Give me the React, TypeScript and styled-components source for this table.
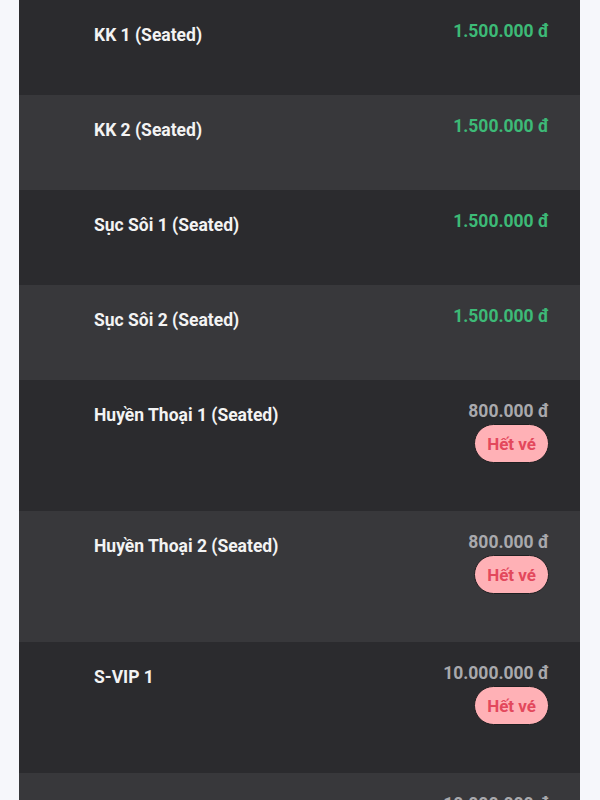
import React from "react";
import styled, { createGlobalStyle } from "styled-components";

const GlobalStyle = createGlobalStyle`
  html, body {
    margin: 0;
    padding: 0;
    background: #f6f7fb;
    font-family: Roboto, "Noto Sans", "Liberation Sans", sans-serif;
  }
`;

const Page = styled.div`
  padding: 0 19px;
  height: 800px;
  overflow: hidden;
`;

const List = styled.div`
  display: flex;
  flex-direction: column;
  width: 561px;
`;

const Row = styled.div<{ $alt: boolean }>`
  display: flex;
  justify-content: space-between;
  align-items: flex-start;
  padding: 23px 31px 48px 75px;
  background: ${(p) => (p.$alt ? "#38383b" : "#2b2b2e")};
`;

const Title = styled.div`
  font-size: 17.5px;
  font-weight: 700;
  line-height: 24px;
  color: #f3f3f3;
`;

const Side = styled.div`
  display: flex;
  flex-direction: column;
  align-items: flex-end;
  gap: 5px;
`;

const Price = styled.div<{ $available: boolean }>`
  font-size: 17.5px;
  font-weight: 700;
  line-height: 16px;
  color: ${(p) => (p.$available ? "#3dba77" : "#a9a9ad")};
`;

const SoldOut = styled.div`
  height: 39px;
  box-sizing: border-box;
  padding: 0 12px;
  display: flex;
  align-items: center;
  border-radius: 20px;
  border: 1px solid #1f1f21;
  background: #ffb1b6;
  color: #e3485c;
  font-size: 17px;
  font-weight: 700;
`;

type Ticket = { name: string; price: string; soldOut: boolean };

const tickets: Ticket[] = [
  { name: "KK 1 (Seated)", price: "1.500.000 đ", soldOut: false },
  { name: "KK 2 (Seated)", price: "1.500.000 đ", soldOut: false },
  { name: "Sục Sôi 1 (Seated)", price: "1.500.000 đ", soldOut: false },
  { name: "Sục Sôi 2 (Seated)", price: "1.500.000 đ", soldOut: false },
  { name: "Huyền Thoại 1 (Seated)", price: "800.000 đ", soldOut: true },
  { name: "Huyền Thoại 2 (Seated)", price: "800.000 đ", soldOut: true },
  { name: "S-VIP 1", price: "10.000.000 đ", soldOut: true },
  { name: "S-VIP 2", price: "10.000.000 đ", soldOut: true },
];

export default function App() {
  return (
    <>
      <GlobalStyle />
      <Page>
        <List>
          {tickets.map((t, i) => (
            <Row key={t.name} $alt={i % 2 === 1}>
              <Title>{t.name}</Title>
              <Side>
                <Price $available={!t.soldOut}>{t.price}</Price>
                {t.soldOut && <SoldOut>Hết vé</SoldOut>}
              </Side>
            </Row>
          ))}
        </List>
      </Page>
    </>
  );
}
